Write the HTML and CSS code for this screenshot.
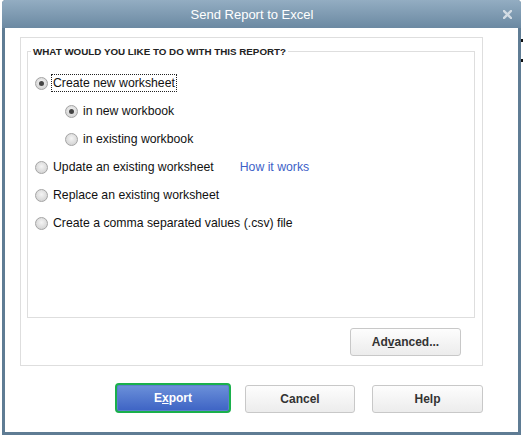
FILE: index.html
```html
<!DOCTYPE html>
<html lang="en">
<head>
  <meta charset="UTF-8" />
  <title>Send Report to Excel</title>
  <link rel="stylesheet" href="styles.css">
</head>
<body>
  <div class="dialog">
    <div class="titlebar">
      <span class="title">Send Report to Excel</span>
      <svg class="close-btn" width="9" height="9" viewBox="0 0 9 9">
        <path d="M1 1 L8 8 M8 1 L1 8" stroke="#d3dce4" stroke-width="2.4" stroke-linecap="square"/>
      </svg>
    </div>

    <div class="dialog-body">
      <div class="group-box">
        <fieldset class="options">
          <legend>WHAT WOULD YOU LIKE TO DO WITH THIS REPORT?</legend>

          <div class="opt-row">
            <span class="radio checked"></span>
            <span class="opt-label focused">Create new worksheet</span>
          </div>
          <div class="opt-row sub">
            <span class="radio checked"></span>
            <span class="opt-label">in new workbook</span>
          </div>
          <div class="opt-row sub">
            <span class="radio"></span>
            <span class="opt-label">in existing workbook</span>
          </div>
          <div class="opt-row">
            <span class="radio"></span>
            <span class="opt-label">Update an existing worksheet</span>
            <a href="#" class="help-link">How it works</a>
          </div>
          <div class="opt-row">
            <span class="radio"></span>
            <span class="opt-label">Replace an existing worksheet</span>
          </div>
          <div class="opt-row">
            <span class="radio"></span>
            <span class="opt-label">Create a comma separated values (.csv) file</span>
          </div>
        </fieldset>

        <div class="advanced-row">
          <button class="btn">Ad<u>v</u>anced...</button>
        </div>
      </div>

      <div class="button-row">
        <button class="btn primary">E<u>x</u>port</button>
        <button class="btn cancel">Cancel</button>
        <button class="btn">Help</button>
      </div>
    </div>
  </div>
  <!-- bits of the window behind -->
  <span class="behind-tick t1"></span>
  <span class="behind-tick t2"></span>
</body>
</html>
```

FILE: styles.css
```css
html, body {
  margin: 0;
  padding: 0;
  background: #fff;
  font-family: Arial, "Liberation Sans", sans-serif;
}
/* -- WINDOW -- */
.dialog {
  margin-left: 2px;
  width: 519px;
  height: 435px;
  box-sizing: border-box;
  border: 3px solid #5f7c94;
  border-top: none;
  border-radius: 4px 4px 0 0;
  background: #fff;
  display: flex;
  flex-direction: column;
}
.titlebar {
  height: 28px;
  margin: 0 -3px;
  padding-right: 19px;
  border-radius: 4px 4px 0 0;
  background: linear-gradient(#93adc2, #6b89a2);
  display: flex;
  align-items: center;
  justify-content: center;
  position: relative;
}
.title {
  color: #fff;
  font-size: 13px;
}
.close-btn {
  position: absolute;
  right: 9px;
  top: 10px;
}
.dialog-body {
  flex: 1;
  padding: 9px 35px 0 15px;
  display: flex;
  flex-direction: column;
}
/* -- OPTIONS BOX -- */
.group-box {
  height: 329px;
  box-sizing: border-box;
  border: 1px solid #dedede;
  padding: 8px 7px 0 6px;
}
.options {
  margin: 0;
  height: 272px;
  box-sizing: border-box;
  border: 1px solid #dedede;
  padding: 12px 0 0 7px;
}
.options legend {
  font-size: 9.8px;
  font-weight: bold;
  color: #222;
  padding: 0 2px;
  margin-left: -4px;
}
.opt-row {
  height: 28px;
  display: flex;
  align-items: center;
  font-size: 12.25px;
  color: #111;
}
.opt-row.sub { padding-left: 30px; }
.radio {
  width: 11px;
  height: 11px;
  border-radius: 50%;
  border: 1px solid #a4a4a4;
  background: radial-gradient(circle at 50% 40%, #f4f4f4, #cbcbcb);
  margin-right: 4px;
  flex-shrink: 0;
  display: flex;
  align-items: center;
  justify-content: center;
}
.radio.checked::after {
  content: "";
  width: 5px;
  height: 5px;
  border-radius: 50%;
  background: #444;
}
.opt-label { padding: 1px 1px; }
.opt-label.focused { outline: 1px dotted #222; }
.help-link {
  margin-left: 25px;
  color: #3d5fc8;
  text-decoration: none;
}
.advanced-row {
  display: flex;
  justify-content: flex-end;
  padding: 10px 14px 0 0;
}
/* -- BUTTONS -- */
.btn {
  width: 111px;
  height: 28px;
  border: 1px solid #c8c8c8;
  border-radius: 3px;
  background: linear-gradient(#fdfdfd, #ececec);
  font-family: inherit;
  font-size: 12px;
  font-weight: bold;
  color: #333;
  padding: 0;
}
.btn u { text-decoration-thickness: 1px; }
.button-row {
  display: flex;
  justify-content: flex-end;
  gap: 17px;
  padding-top: 19px;
}
.btn.cancel {
  width: 110px;
  margin-left: -3px;
}
.btn.primary {
  width: 116px;
  height: 30px;
  margin-top: -2px;
  border: 2px solid #1ab04c;
  border-radius: 4px;
  background: linear-gradient(#6c91da, #3d63c4);
  box-shadow: inset 0 0 0 1px #5b7fce;
  color: #fff;
}
.behind-tick {
  position: absolute;
  left: 521px;
  width: 2px;
  height: 3px;
  background: #111;
}
.behind-tick.t1 { top: 39px; }
.behind-tick.t2 { top: 59px; }
```
